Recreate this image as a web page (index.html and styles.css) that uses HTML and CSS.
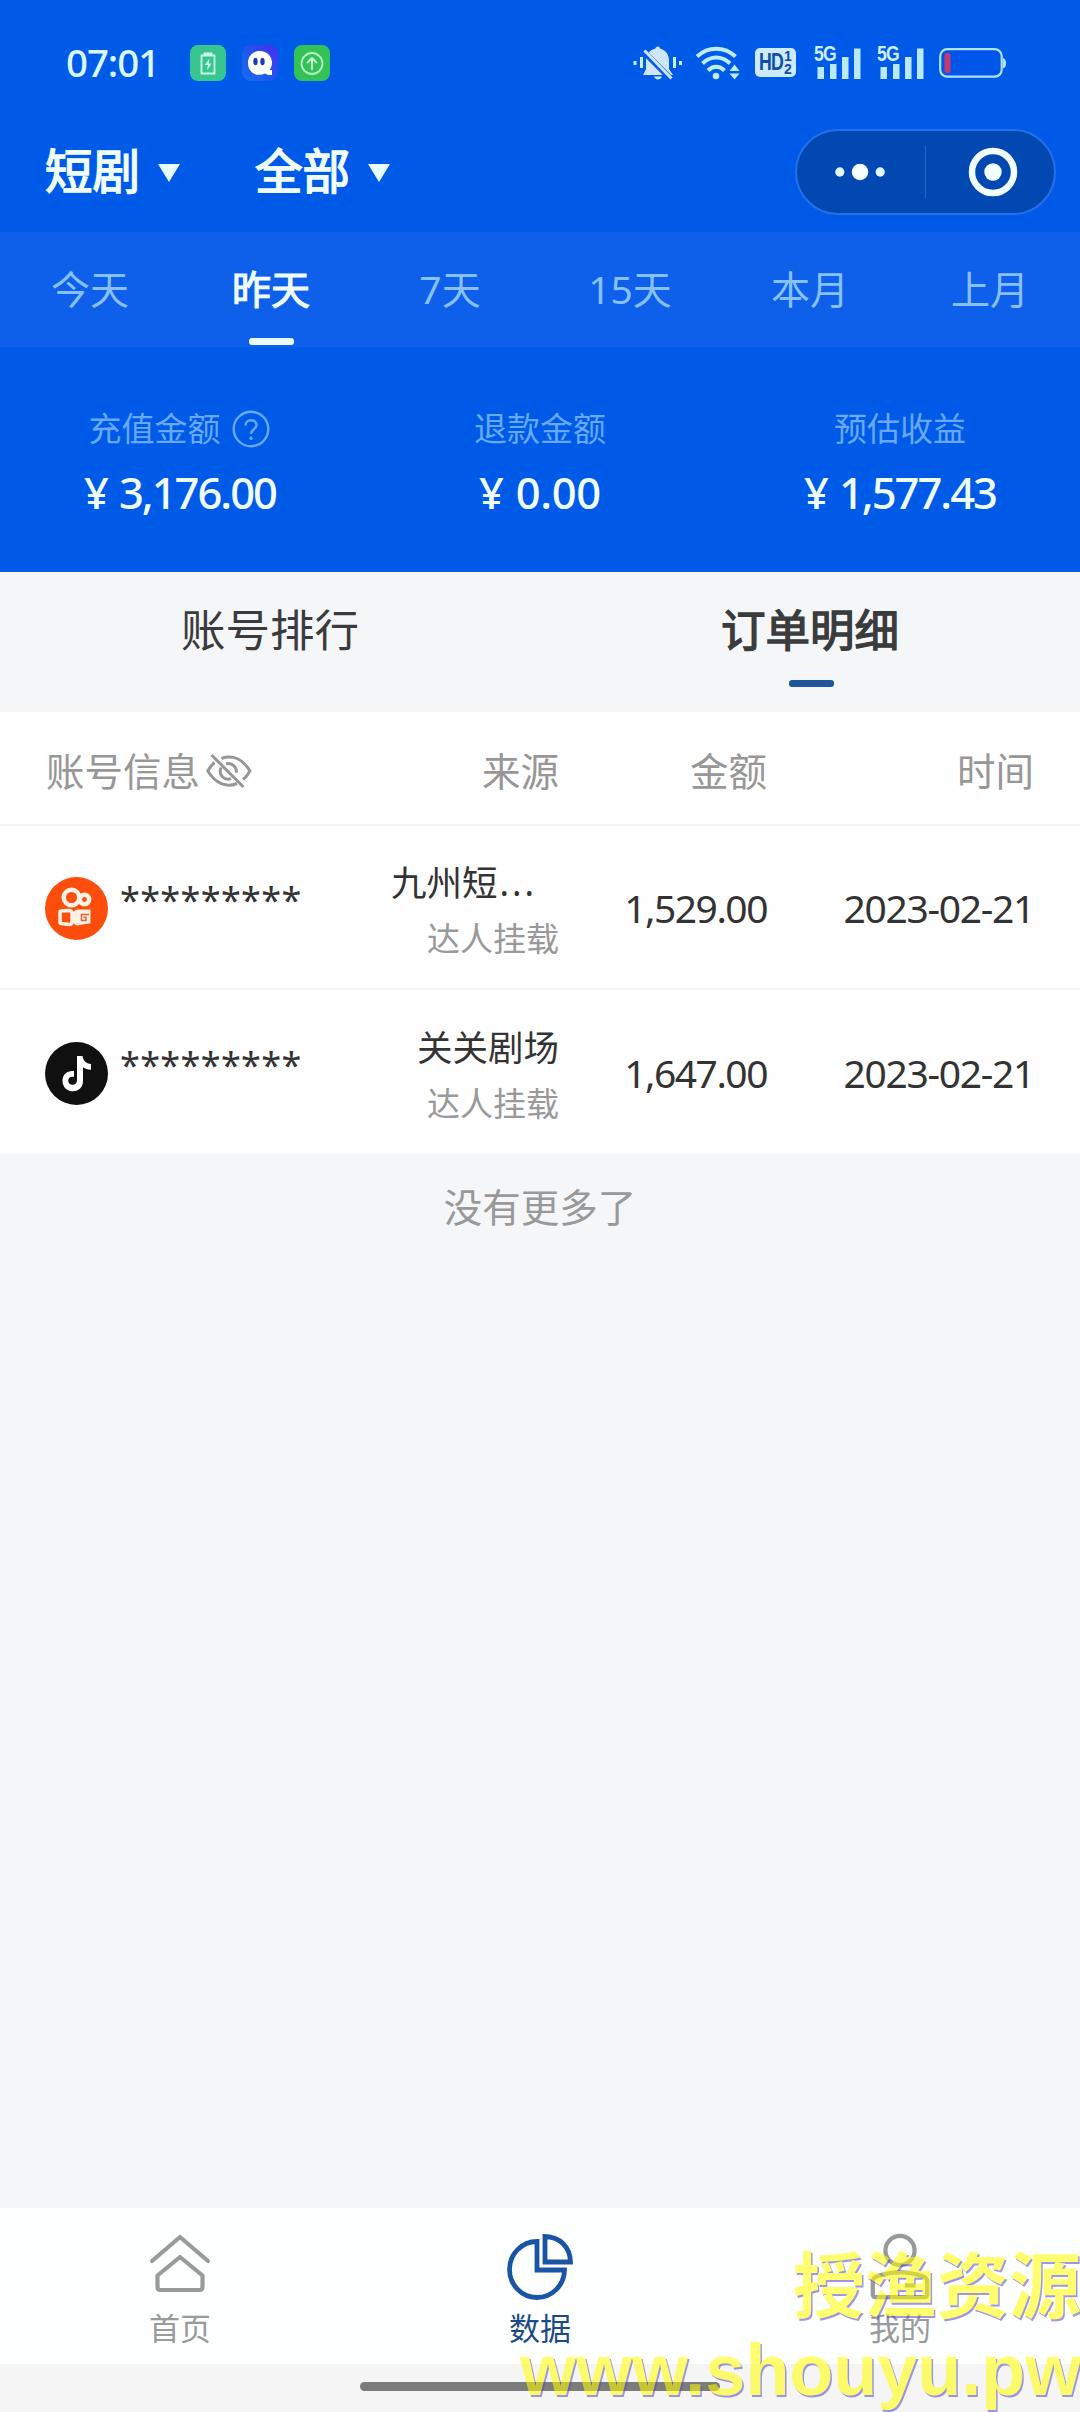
FILE: index.html
```html
<!DOCTYPE html>
<html lang="zh-CN">
<head>
<meta charset="utf-8">
<title>数据</title>
<link rel="stylesheet" href="styles.css">
</head>
<body>
<div class="screen">
  <header class="hero">
    <div class="status">
      <span class="clock">07:01</span>
      <div class="status-apps">
        <svg width="36" height="36" viewBox="0 0 36 36"><rect width="36" height="36" rx="8" fill="#37c690"/><path d="M11.500 10.500h13v18h-13zM14.500 10V8.500h7V10" fill="none" stroke="#c9fbe4" stroke-width="1.800"/><path d="M19.500 13.500l-4.500 6.500h3l-1 5.500 4.500-7h-3z" fill="#d8fff0"/></svg>
        <svg width="36" height="36" viewBox="0 0 36 36"><defs><linearGradient id="q" x1="0" y1="1" x2="1" y2="0"><stop offset="0" stop-color="#1a6cf0"/><stop offset=".45" stop-color="#2058ec"/><stop offset="1" stop-color="#4a2cf4"/></linearGradient></defs><rect width="36" height="36" rx="9" fill="url(#q)"/><path d="M18 6c7 0 12 5 12 12 0 3-1 5-2.500 7H30v5h-4l-3-1.500C14 32.500 6 27 6 18 6 11 11 6 18 6z" fill="#fff"/><ellipse cx="13.500" cy="16.500" rx="2.200" ry="3.800" fill="#1d3fae"/><ellipse cx="20.500" cy="16.500" rx="2.200" ry="3.800" fill="#1d3fae"/></svg>
        <svg width="36" height="36" viewBox="0 0 36 36"><rect width="36" height="36" rx="8" fill="#33c258"/><circle cx="18" cy="18.500" r="10.500" fill="none" stroke="#b6f5c3" stroke-width="1.800"/><path d="M18 25V13M13 18l5-5 5 5" fill="none" stroke="#c8fbd2" stroke-width="1.900"/></svg>
      </div>
      <div class="status-sys">
        <svg class="i-bell" width="50" height="36" viewBox="0 0 50 36"><path d="M2 16v4M8.500 12v11M41.500 12v11M47.500 16v4" stroke="#c6efff" stroke-width="3"/><path d="M25 1.500c1.500 0 2 1 2 2C33 5 36 10 36 16v8l4 6H10l3-6v-8c0-6 3-11 9.500-12.500 0-1 1-2 2.500-2z" fill="#cfe6ff"/><path d="M21 31.500h8c-.8 2-2.200 3-4 3s-3.200-1-4-3z" fill="#c6efff"/><path d="M9 5l29 29" stroke="#005ae8" stroke-width="6"/><path d="M11.500 5.500l27 28" stroke="#cfe6ff" stroke-width="3"/></svg>
        <svg class="i-wifi" width="46" height="36" viewBox="0 0 46 36"><g fill="none" stroke="#bdecff" stroke-width="4"><path d="M2 11.500c11-10.500 27.500-10.500 38.500 0"/><path d="M7.500 18.500c8-8 19.500-8 27.500 0"/><path d="M13 25.500c5-5 11.500-5 16.500 0"/></g><circle cx="21" cy="31" r="3.300" fill="#bdecff"/><path d="M34.500 26l5-6.500 5 6.500zM34.500 28.500h10l-5 6z" fill="#bdecff"/></svg>
        <div class="hd"><b>HD</b><span><i>1</i><i>2</i></span></div>
        <div class="signal"><b>5G</b><svg width="47" height="34" viewBox="0 0 47 34"><path d="M3.500 21h6.500v12H3.500zM16 18h6.500v15H16zM28 11h6.500v22H28zM40 2.500h6.500V33H40z" fill="#b9e9ff"/></svg></div>
        <div class="signal"><b>5G</b><svg width="47" height="34" viewBox="0 0 47 34"><path d="M3.500 21h6.500v12H3.500zM16 18h6.500v15H16zM28 11h6.500v22H28zM40 2.500h6.500V33H40z" fill="#b9e9ff"/></svg></div>
        <svg class="i-batt" width="68" height="32" viewBox="0 0 68 32"><rect x="1.200" y="2.200" width="61.500" height="27.500" rx="7" fill="#0055ea" stroke="#aee2ff" stroke-width="2.200"/><rect x="5.500" y="6" width="6" height="20" rx="2.500" fill="#c23a72"/><path d="M64.500 11.500c2.800 1 2.800 8.500 0 9.500z" fill="#aee2ff" stroke="#aee2ff"/></svg>
      </div>
    </div>

    <div class="filters">
      <div class="filter">短剧<svg width="22" height="18" viewBox="0 0 22 18"><path d="M0 0h22L11 18z" fill="#e6fcff"/></svg></div>
      <div class="filter">全部<svg width="22" height="18" viewBox="0 0 22 18"><path d="M0 0h22L11 18z" fill="#e6fcff"/></svg></div>
      <div class="capsule">
        <svg width="130" height="84" viewBox="0 0 130 84"><circle cx="43.500" cy="42" r="4.700" fill="#dff6ff"/><circle cx="64" cy="42" r="8.400" fill="#f4ffff"/><circle cx="84.500" cy="42" r="4.700" fill="#dff6ff"/></svg>
        <span class="capsule-line"></span>
        <svg width="128" height="84" viewBox="0 0 128 84"><circle cx="67" cy="42" r="21" fill="none" stroke="#f1fdff" stroke-width="6.500"/><circle cx="67" cy="42" r="8.700" fill="#f1fdff"/></svg>
      </div>
    </div>

    <nav class="days">
      <span>今天</span><span class="on">昨天</span><span>7天</span><span>15天</span><span>本月</span><span>上月</span>
    </nav>

    <div class="stats">
      <div class="stat"><div class="label">充值金额<svg width="38" height="38" viewBox="0 0 38 38"><circle cx="19" cy="19" r="17.300" fill="none" stroke="#66a9ff" stroke-width="2.400"/><path d="M13.500 15.500c0-7 11-7 11-.5 0 4.500-5.500 4-5.500 9" fill="none" stroke="#66a9ff" stroke-width="2.400"/><circle cx="19" cy="28.300" r="1.700" fill="#66a9ff"/></svg></div><div class="money"><i>¥</i>3,176.00</div></div>
      <div class="stat"><div class="label">退款金额</div><div class="money zero"><i>¥</i>0.00</div></div>
      <div class="stat"><div class="label">预估收益</div><div class="money"><i>¥</i>1,577.43</div></div>
    </div>
  </header>

  <nav class="views"><span>账号排行</span><span class="on">订单明细</span></nav>

  <section class="orders">
    <div class="row head">
      <div class="acct">账号信息<svg width="46" height="34" viewBox="0 0 46 34"><g fill="none" stroke="#979797" stroke-width="3"><path d="M15.500 4.500C27 .5 37 5.500 44 17c-2 3.500-4.300 6.300-7 8.700M8.500 8.500C5.500 11 3.500 13.700 1.800 17 9.500 29.500 20.500 34 31 29.500"/><path d="M20 9.800c6-1.300 11 3.200 10.300 9M15 13.500c-3 7.500 3.500 13.500 10 11"/><path d="M5.500 1L37.500 33"/></g></svg></div>
      <div>来源</div><div>金额</div><div>时间</div>
    </div>
    <div class="row">
      <div class="acct">
        <svg class="avatar" width="63" height="63" viewBox="0 0 63 63"><circle cx="31.500" cy="31.500" r="31.500" fill="#fc4d0d"/><g fill="none" stroke="#fff1e4" stroke-width="4.500"><circle cx="26.500" cy="20.500" r="7.800"/><circle cx="39.500" cy="22.500" r="4.700"/><path d="M15 35.500q0-1.500 1.500-1.500l7.500-.5q3 0 3 3v8q0 3-3 3l-7.500-1q-1.500 0-1.500-1.500z" stroke-width="3.500"/><path d="M27.500 37l4.500-3h12v11l-12 2-4.500-3z" stroke-width="3" fill="#fff1e4"/></g><path d="M44 37.500h-7.500v6H41v-3.200h-2.500" stroke="#e8603a" stroke-width="1.500" fill="none"/></svg>
        <span class="stars">*********</span>
      </div>
      <div class="source"><p class="cut">九州短<span>...</span></p><small>达人挂载</small></div>
      <div class="num">1,529.00</div><div class="num date">2023-02-21</div>
    </div>
    <div class="row">
      <div class="acct">
        <svg class="avatar" width="63" height="63" viewBox="0 0 63 63"><circle cx="31.500" cy="31.500" r="31.500" fill="#101010"/><path d="M32 14h5.500c.6 4.500 3.500 7.500 8.500 8v5.700c-3.200 0-6-1-8-2.500V39c0 14-20.500 13.500-20.500-.3 0-6.500 5-10.500 11.500-9.700v5.800c-3.500-.7-5.800 1-5.800 4 0 5.500 8.800 5.500 8.800-.8z" fill="#fff"/></svg>
        <span class="stars">*********</span>
      </div>
      <div class="source"><p>关关剧场</p><small>达人挂载</small></div>
      <div class="num">1,647.00</div><div class="num date">2023-02-21</div>
    </div>
  </section>

  <p class="empty">没有更多了</p>

  <nav class="tabbar">
    <div class="tab"><svg width="68" height="68" viewBox="0 0 68 68"><g fill="none" stroke="#999a9c" stroke-width="4.200" stroke-linejoin="round" stroke-linecap="round"><path d="M6 29L34 5l28 24"/><path d="M34 25L11.500 43.500V55q0 3 3 3h39q3 0 3-3V43.500z"/></g></svg>首页</div>
    <div class="tab on"><svg width="68" height="68" viewBox="0 0 68 68"><g fill="none" stroke="#1a55a5" stroke-width="4.800"><path d="M31 9.500A27.500 28 0 1 0 58.500 38H31z"/><path d="M39 4.500V30h25.500C64 15 54 5 39 4.500z"/></g></svg>数据</div>
    <div class="tab"><svg width="68" height="70" viewBox="0 0 68 70"><g fill="none" stroke="#999a9c" stroke-width="4.400"><circle cx="34" cy="19" r="15"/><path d="M9 67q-3 0-3-3V51q0-3 3-5 25-9 50 0 3 2 3 5v13q0 3-3 3z"/><path d="M39 55h11"/></g></svg>我的</div>
  </nav>
  <div class="gesture"><span></span></div>

  <div class="mark"><div class="mark-name">授渔资源</div><div class="mark-url">www.shouyu.pw</div></div>
</div>
</body>
</html>
```

FILE: styles.css
```css
* { box-sizing: border-box; }
body { margin: 0; background: #f5f6f8; }
p { margin: 0; }
i { font-style: normal; }
svg { display: block; flex: none; }

.screen {
  position: relative;
  display: flex;
  flex-direction: column;
  width: 1080px;
  height: 2412px;
  overflow: hidden;
  color: #333;
  background: #f5f6f8;
  font-family: "Noto Sans", "Noto Sans CJK SC", sans-serif;
}

/* blue header */
.hero { height: 572px; background: #005ae8; color: #effdff; }

.status { display: flex; height: 125px; padding: 0 73px 0 66px; align-items: center; }
.clock { width: 124px; padding-bottom: 1px; color: #d9f7ff; font-size: 38.5px; font-weight: 500; line-height: 50px; letter-spacing: -1.1px; }
.status-apps { display: flex; gap: 16px; }
.status-sys { display: flex; margin-left: auto; align-items: center; }
.i-wifi { margin-left: 12px; }
.hd {
  display: flex;
  width: 41px;
  height: 29px;
  margin-left: 14px;
  padding-left: 4px;
  border-radius: 5px;
  background: #cdeaff;
  color: #0d4ea6;
  font-family: "Liberation Sans", sans-serif;
}
.hd b { width: 25px; font: 700 23px/29px "Liberation Sans", sans-serif; letter-spacing: -1px; transform: scaleX(.77); transform-origin: left; }
.hd span { display: flex; flex-direction: column; font-size: 14px; font-weight: 700; line-height: 13px; padding-top: 2px; }
.signal { display: grid; width: 47px; margin-left: 18px; }
.signal + .signal { margin-left: 16px; }
.signal b, .signal svg { grid-area: 1 / 1; }
.signal b { color: #cdeeff; font: 700 22px/16px "Liberation Sans", sans-serif; letter-spacing: -1px; transform: scaleX(.8); transform-origin: left; }
.i-batt { margin-left: 15px; }

.filters { display: flex; height: 107px; padding: 0 24px 0 45px; }
.filter { display: flex; width: 210px; height: 92px; align-items: center; gap: 18px; font-size: 47.500px; line-height: 60px; -webkit-text-stroke: 1.6px #effdff; }
.filter svg { margin-top: 4px; }
.capsule { display: flex; width: 261px; height: 86px; margin: 4px 0 0 auto; align-items: center; border: 2px solid #2470e8; border-radius: 43px; background: #0148b2; }
.capsule svg { flex: 1; min-width: 0; }
.capsule-line { width: 1px; height: 52px; background: #2c69c6; }

.days { display: grid; grid-template-columns: repeat(6, 180px); height: 115px; background: #0e60ea; }
.days span { display: flex; flex-direction: column; align-items: center; padding-top: 27px; color: #86c0ff; font-size: 39px; line-height: 60px; }
.days .on { padding-left: 2px; color: #effdff; -webkit-text-stroke: 1.2px #effdff; }
.days .on::after { content: ""; width: 45px; height: 7px; margin-top: 19px; border-radius: 3px; background: #e8fcff; }

.stats { display: grid; grid-template-columns: repeat(3, 360px); padding-top: 63px; }
.stat { display: flex; flex-direction: column; align-items: center; }
.label { display: flex; height: 38px; align-items: center; gap: 11px; color: #66a9ff; font-size: 33px; line-height: 38px; }
.stat:first-child .label { margin-left: -2px; }
.money { margin-top: 14px; font-size: 43.5px; font-weight: 500; line-height: 60px; letter-spacing: -2px; }
.money i { margin-right: 12px; }
.money.zero { letter-spacing: -.3px; }

/* list switch */
.views { display: grid; grid-template-columns: 540px 540px; height: 140px; }
.views span { display: flex; flex-direction: column; align-items: center; padding-top: 28px; color: #3a3b3d; font-size: 44.500px; line-height: 60px; }
.views .on { -webkit-text-stroke: 1.4px #3a3b3d; }
.views .on::after { content: ""; width: 45px; height: 7px; margin: 20px 0 0 2px; border-radius: 3px; background: #1f559d; }

/* order table */
.orders { background: #fefefe; }
.row { display: grid; grid-template-columns: 1fr 250px 208px 267px; height: 164px; padding: 0 46px; align-items: center; text-align: right; border-bottom: 2px solid #f3f4f5; }
.row:last-child { border-bottom: 0; }
.head { height: 114px; padding-top: 5px; color: #979797; font-size: 38.500px; line-height: 50px; }
.acct { display: flex; align-items: center; text-align: left; white-space: nowrap; }
.head .acct { gap: 6px; }
.row:not(.head) .acct { margin-left: -1px; gap: 12px; padding-top: 2px; }
.stars { font-size: 36px; line-height: 40px; letter-spacing: .35px; padding-bottom: 17px; }
.source { padding-top: 13px; }
.source p { font-size: 35.500px; line-height: 50px; }
.source .cut { padding-right: 22px; }
.cut span { letter-spacing: 3px; padding-left: 2px; }
.source small { display: block; color: #999; font-size: 33px; line-height: 64px; }
.num { padding-top: 1px; font-size: 39px; line-height: 50px; letter-spacing: -1.5px; }
.date { letter-spacing: -1.3px; }

.empty { padding-top: 26px; color: #999; font-size: 38.500px; line-height: 54px; text-align: center; }

/* bottom navigation */
.tabbar { display: grid; grid-template-columns: repeat(3, 360px); height: 156px; margin-top: auto; background: #fdfefe; }
.tab { display: flex; flex-direction: column; align-items: center; padding-top: 24px; color: #999a9c; font-size: 31px; line-height: 56px; }
.tab svg { height: 68px; overflow: visible; }
.tab.on { color: #1c4c85; }
.gesture { display: flex; height: 48px; padding-top: 18px; justify-content: center; background: #f5f5f5; }
.gesture span { width: 360px; height: 9px; border-radius: 5px; background: #7c7c7c; }

/* translucent watermark laid over the corner */
.mark {
  position: absolute;
  left: 520px;
  top: 2247px;
  width: 570px;
  color: #ff0;
  white-space: nowrap;
  opacity: .56;
  text-shadow: 1.5px 1.5px 0 #5548d8;
}
.mark-name { margin-left: 273px; font-size: 72px; font-weight: 700; line-height: 74px; }
.mark-url { font: 700 72px/84px "Liberation Sans", sans-serif; padding-top: 7px; }
```
